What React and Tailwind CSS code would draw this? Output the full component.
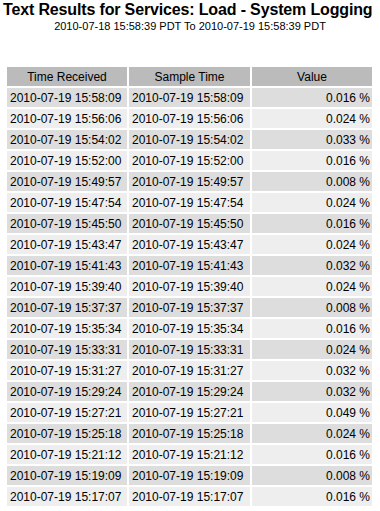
const rows = [
  ["2010-07-19 15:58:09", "0.016 %"],
  ["2010-07-19 15:56:06", "0.024 %"],
  ["2010-07-19 15:54:02", "0.033 %"],
  ["2010-07-19 15:52:00", "0.016 %"],
  ["2010-07-19 15:49:57", "0.008 %"],
  ["2010-07-19 15:47:54", "0.024 %"],
  ["2010-07-19 15:45:50", "0.016 %"],
  ["2010-07-19 15:43:47", "0.024 %"],
  ["2010-07-19 15:41:43", "0.032 %"],
  ["2010-07-19 15:39:40", "0.024 %"],
  ["2010-07-19 15:37:37", "0.008 %"],
  ["2010-07-19 15:35:34", "0.016 %"],
  ["2010-07-19 15:33:31", "0.024 %"],
  ["2010-07-19 15:31:27", "0.032 %"],
  ["2010-07-19 15:29:24", "0.032 %"],
  ["2010-07-19 15:27:21", "0.049 %"],
  ["2010-07-19 15:25:18", "0.024 %"],
  ["2010-07-19 15:21:12", "0.016 %"],
  ["2010-07-19 15:19:09", "0.008 %"],
  ["2010-07-19 15:17:07", "0.016 %"],
];

export default function App() {
  return (
    <div className="w-[380px] h-[511px] overflow-hidden bg-white font-['Liberation_Sans',Arial,sans-serif] text-black">
      <h1 className="pl-[3px] text-[16px] font-bold leading-[20px] tracking-[-0.15px] whitespace-nowrap">
        Text Results for Services: Load - System Logging
      </h1>
      <p className="text-center text-[11px] leading-[13px]">
        2010-07-18 15:58:39 PDT To 2010-07-19 15:58:39 PDT
      </p>

      <table className="mt-[32px] ml-[5px] border-separate border-spacing-[2px] text-[12px]">
        <thead>
          <tr>
            <th className="w-[120px] h-[19px] p-0 bg-[#bbbbbb] font-normal text-center">
              Time Received
            </th>
            <th className="w-[121px] h-[19px] p-0 bg-[#bbbbbb] font-normal text-center">
              Sample Time
            </th>
            <th className="w-[120px] h-[19px] p-0 bg-[#bbbbbb] font-normal text-center">
              Value
            </th>
          </tr>
        </thead>
        <tbody>
          {rows.map(([time, value], i) => (
            <tr key={i} className={i % 2 === 0 ? "bg-[#dddddd]" : "bg-[#eeeeee]"}>
              <td className="h-[19px] py-0 pl-[3px] pr-0 whitespace-nowrap">{time}</td>
              <td className="h-[19px] py-0 pl-[3px] pr-0 whitespace-nowrap">{time}</td>
              <td className="h-[19px] py-0 pr-[2px] text-right whitespace-nowrap">{value}</td>
            </tr>
          ))}
        </tbody>
      </table>
    </div>
  );
}
